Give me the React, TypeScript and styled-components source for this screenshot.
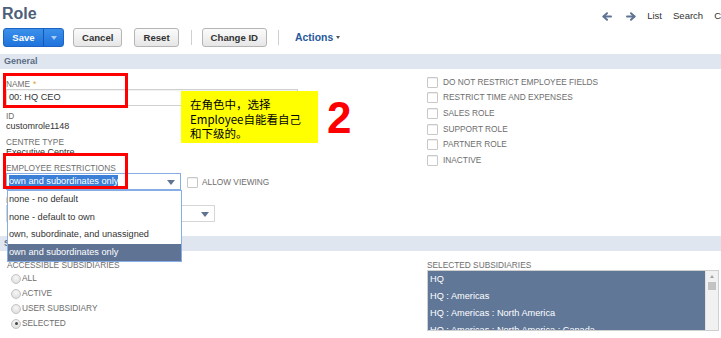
import React from 'react';
import styled, { createGlobalStyle } from 'styled-components';

const GlobalStyle = createGlobalStyle`
  html, body {
    margin: 0;
    padding: 0;
    background: #fff;
    overflow: hidden;
  }
  body {
    font-family: "Liberation Sans", Arial, sans-serif;
    color: #333;
  }
`;

const Page = styled.div`
  position: relative;
  width: 721px;
  height: 338px;
  overflow: hidden;
`;

const TitleRow = styled.div`
  display: flex;
  justify-content: space-between;
  align-items: flex-start;
  height: 26px;
`;

const Title = styled.h1`
  margin: 4px 0 0 2px;
  font-size: 16px;
  line-height: 20px;
  font-weight: bold;
  color: #4d5f79;
`;

const Nav = styled.nav`
  display: flex;
  align-items: center;
  gap: 11px;
  margin: 10px -38px 0 0;
  font-size: 9.5px;
  line-height: 12px;
  color: #333;
  white-space: nowrap;
`;

const NavArrow = styled.svg<{ $gap?: number }>`
  display: block;
  margin-right: ${p => p.$gap ?? 0}px;
`;

const Toolbar = styled.div`
  display: flex;
  align-items: center;
  height: 19px;
  margin: 2px 0 7px 3px;
`;

const SaveGroup = styled.div`
  display: flex;
  height: 19px;
  border: 1px solid #1b63c4;
  border-radius: 3px;
  box-sizing: border-box;
  background: linear-gradient(#3b90ea, #1f73dc);
  color: #fff;
  font-size: 9.6px;
  font-weight: bold;
  overflow: hidden;
`;

const SaveMain = styled.div`
  width: 39px;
  display: flex;
  align-items: center;
  justify-content: center;
`;

const SaveCaret = styled.div`
  width: 19px;
  border-left: 1px solid #1757b3;
  display: flex;
  align-items: center;
  justify-content: center;
  &::after {
    content: '';
    border-left: 3px solid transparent;
    border-right: 3px solid transparent;
    border-top: 4px solid #a9cbf3;
  }
`;

const Button = styled.div<{ $ml: number }>`
  height: 19px;
  box-sizing: border-box;
  margin-left: ${p => p.$ml}px;
  padding: 0 8px;
  border: 1px solid #b5b5b5;
  border-radius: 3px;
  background: linear-gradient(#fbfbfb, #e6e6e6);
  font-size: 9.6px;
  font-weight: bold;
  line-height: 17px;
  color: #333;
  white-space: nowrap;
`;

const Divider = styled.div<{ $ml: number }>`
  width: 1px;
  height: 15px;
  margin-left: ${p => p.$ml}px;
  background: #d0d0d0;
`;

const ActionsMenu = styled.div`
  margin-left: 16px;
  font-size: 10.4px;
  font-weight: bold;
  color: #26599a;
  display: flex;
  align-items: center;
  gap: 3px;
  &::after {
    content: '';
    border-left: 2.5px solid transparent;
    border-right: 2.5px solid transparent;
    border-top: 3px solid #555;
  }
`;

const SectionBar = styled.div`
  height: 15px;
  line-height: 15px;
  padding-left: 4px;
  background: #e0e6ef;
  font-size: 9px;
  font-weight: bold;
  color: #5a6c86;
`;

const FormGrid = styled.div`
  display: grid;
  grid-template-columns: 427px 1fr;
`;

const LeftCol = styled.div<{ $pt: number; $pb: number; $pl: number; $gap: number }>`
  display: flex;
  flex-direction: column;
  gap: ${p => p.$gap}px;
  padding: ${p => p.$pt}px 0 ${p => p.$pb}px ${p => p.$pl}px;
`;

const RightCol = styled.div<{ $pt: number }>`
  padding-top: ${p => p.$pt}px;
`;

const Field = styled.div`
  display: flex;
  flex-direction: column;
`;

const Label = styled.div`
  font-size: 8.3px;
  line-height: 9px;
  color: #6d6d6d;
  text-transform: uppercase;
  white-space: nowrap;
`;

const Star = styled.span`
  color: #e39b2e;
  margin-left: 3px;
`;

const TextBox = styled.div`
  width: 292px;
  height: 17px;
  box-sizing: border-box;
  border: 1px solid #d0d0d0;
  box-shadow: inset 0 1px 1px rgba(0, 0, 0, 0.06);
  padding-left: 2px;
  font-size: 9.2px;
  line-height: 15px;
  color: #333;
`;

const Value = styled.div`
  font-size: 9px;
  line-height: 11px;
  color: #333;
`;

const SelectRow = styled.div`
  display: flex;
  align-items: flex-start;
`;

const SelectBox = styled.div<{ $w: number; $focus?: boolean }>`
  position: relative;
  width: ${p => p.$w}px;
  height: 17px;
  box-sizing: border-box;
  border: 1px solid ${p => (p.$focus ? '#86ade4' : '#d6d6d6')};
  padding: 1px 0 0 2px;
  font-size: 9.2px;
  line-height: 13px;
  &::after {
    content: '';
    position: absolute;
    right: 5px;
    top: 6px;
    border-left: 4px solid transparent;
    border-right: 4px solid transparent;
    border-top: 5px solid #5f7394;
  }
`;

const Highlight = styled.span`
  display: inline-block;
  background: #3b7fd6;
  color: #fff;
`;

const Dropdown = styled.div`
  position: absolute;
  top: 16px;
  left: 0;
  width: 175px;
  box-sizing: border-box;
  border: 1px solid #86ade4;
  background: #fff;
  z-index: 5;
`;

const Option = styled.div<{ $active?: boolean }>`
  height: 17.6px;
  line-height: 17.6px;
  padding-left: 1px;
  font-size: 9.2px;
  white-space: nowrap;
  color: ${p => (p.$active ? '#fff' : '#333')};
  background: ${p => (p.$active ? '#5f7394' : '#fff')};
`;

const CheckBox = styled.div`
  width: 11px;
  height: 11px;
  box-sizing: border-box;
  border: 1px solid #c8c8c8;
  border-radius: 1px;
  background: #fff;
  box-shadow: inset 0 1px 1px rgba(0, 0, 0, 0.07);
  flex-shrink: 0;
`;

const InlineCheck = styled.div`
  display: flex;
  align-items: center;
  gap: 4px;
  margin: 4px 0 0 6px;
`;

const CheckRow = styled.div`
  display: flex;
  align-items: center;
  gap: 5px;
  height: 15.6px;
`;

const RadioRow = styled.div`
  display: flex;
  align-items: center;
  height: 15px;
  padding-left: 4px;
  gap: 1px;
`;

const Radio = styled.div<{ $checked?: boolean }>`
  width: 10px;
  height: 10px;
  box-sizing: border-box;
  border-radius: 50%;
  border: 1px solid #c4c4c4;
  background: radial-gradient(circle at 50% 35%, #f7f7f7, #d9d9d9);
  display: flex;
  align-items: center;
  justify-content: center;
  &::after {
    content: '';
    width: 3px;
    height: 3px;
    border-radius: 50%;
    background: ${p => (p.$checked ? '#444' : 'transparent')};
  }
`;

const ListBox = styled.div`
  display: flex;
  width: 292px;
  height: 61px;
  box-sizing: border-box;
  border: 1px solid #cfcfcf;
  overflow: hidden;
`;

const ListItems = styled.div`
  flex: 1;
  background: #607798;
`;

const ListItem = styled.div`
  height: 17px;
  line-height: 17px;
  padding-left: 2px;
  font-size: 9.2px;
  color: #fff;
  white-space: nowrap;
`;

const ScrollBar = styled.div`
  width: 12px;
  background: #f1f1f1;
  border-left: 1px solid #e2e2e2;
  display: flex;
  flex-direction: column;
  align-items: center;
  padding-top: 4px;
  gap: 4px;
  &::before {
    content: '';
    border-left: 2.5px solid transparent;
    border-right: 2.5px solid transparent;
    border-bottom: 3px solid #a3a3a3;
  }
`;

const Thumb = styled.div`
  width: 8px;
  height: 8px;
  background: #c3c3c3;
`;

const RedFrame = styled.div<{ $top: number; $left: number; $w: number; $h: number }>`
  position: absolute;
  top: ${p => p.$top}px;
  left: ${p => p.$left}px;
  width: ${p => p.$w}px;
  height: ${p => p.$h}px;
  box-sizing: border-box;
  border: 3px solid #ff0000;
  z-index: 4;
  pointer-events: none;
`;

const Note = styled.div`
  position: absolute;
  top: 91px;
  left: 181px;
  width: 137px;
  height: 52px;
  box-sizing: border-box;
  padding: 6px 4px 0 9px;
  background: #ffff00;
  font-family: "Noto Sans CJK SC", "Liberation Sans", sans-serif;
  font-size: 11.5px;
  line-height: 14.5px;
  color: #000;
  z-index: 4;
`;

const StepNumber = styled.div`
  position: absolute;
  top: 96px;
  left: 327px;
  font-size: 44px;
  line-height: 44px;
  font-weight: bold;
  color: #ff0000;
  z-index: 4;
`;

const rightChecks = [
  'Do not restrict employee fields',
  'Restrict time and expenses',
  'Sales role',
  'Support role',
  'Partner role',
  'Inactive',
];

const restrictionOptions = [
  'none - no default',
  'none - default to own',
  'own, subordinate, and unassigned',
  'own and subordinates only',
];

const radios = ['All', 'Active', 'User subsidiary', 'Selected'];

const subsidiaries = [
  'HQ',
  'HQ : Americas',
  'HQ : Americas : North America',
  'HQ : Americas : North America : Canada',
];

const Arrow = ({ dir, gap }: { dir: 'left' | 'right'; gap?: number }) => (
  <NavArrow width="10" height="9" viewBox="0 0 10 9" $gap={gap}>
    <g
      transform={dir === 'right' ? 'translate(10 0) scale(-1 1)' : undefined}
      fill="none"
      stroke="#5f7394"
      strokeWidth="2"
      strokeLinecap="round"
      strokeLinejoin="round"
    >
      <path d="M1.5 4.5 H9" />
      <path d="M5 1.2 L1.5 4.5 L5 7.8" />
    </g>
  </NavArrow>
);

export default function App() {
  return (
    <Page>
      <GlobalStyle />
      <TitleRow>
        <Title>Role</Title>
        <Nav>
          <Arrow dir="left" gap={3} />
          <Arrow dir="right" />
          <span>List</span>
          <span>Search</span>
          <span>Customize</span>
        </Nav>
      </TitleRow>

      <Toolbar>
        <SaveGroup>
          <SaveMain>Save</SaveMain>
          <SaveCaret />
        </SaveGroup>
        <Button $ml={9}>Cancel</Button>
        <Button $ml={12}>Reset</Button>
        <Divider $ml={12} />
        <Button $ml={10}>Change ID</Button>
        <Divider $ml={11} />
        <ActionsMenu>Actions</ActionsMenu>
      </Toolbar>

      <SectionBar>General</SectionBar>
      <FormGrid>
        <LeftCol $pt={11} $pb={14} $pl={6} $gap={6}>
          <Field>
            <Label>
              Name<Star>*</Star>
            </Label>
            <TextBox>00: HQ CEO</TextBox>
          </Field>
          <Field>
            <Label>ID</Label>
            <Value>customrole1148</Value>
          </Field>
          <Field>
            <Label>Centre Type</Label>
            <Value>Executive Centre</Value>
          </Field>
          <Field>
            <Label>Employee Restrictions</Label>
            <SelectRow>
              <SelectBox $w={175} $focus>
                <Highlight>own and subordinates only</Highlight>
                <Dropdown>
                  {restrictionOptions.map((o, i) => (
                    <Option key={o} $active={i === restrictionOptions.length - 1}>
                      {o}
                    </Option>
                  ))}
                </Dropdown>
              </SelectBox>
              <InlineCheck>
                <CheckBox />
                <Label>Allow Viewing</Label>
              </InlineCheck>
            </SelectRow>
          </Field>
          <Field>
            <Label>Department Restrictions</Label>
            <SelectBox $w={209} />
          </Field>
        </LeftCol>
        <RightCol $pt={5.5}>
          {rightChecks.map(c => (
            <CheckRow key={c}>
              <CheckBox />
              <Label>{c}</Label>
            </CheckRow>
          ))}
        </RightCol>
      </FormGrid>

      <SectionBar>Subsidiary Restrictions</SectionBar>
      <FormGrid>
        <LeftCol $pt={9.5} $pb={0} $pl={7} $gap={0}>
          <Label>Accessible Subsidiaries</Label>
          <div style={{ height: 1.5 }} />
          {radios.map(r => (
            <RadioRow key={r}>
              <Radio $checked={r === 'Selected'} />
              <Label>{r}</Label>
            </RadioRow>
          ))}
        </LeftCol>
        <RightCol $pt={9.5}>
          <Label>Selected Subsidiaries</Label>
          <ListBox>
            <ListItems>
              {subsidiaries.map(s => (
                <ListItem key={s}>{s}</ListItem>
              ))}
            </ListItems>
            <ScrollBar>
              <Thumb />
            </ScrollBar>
          </ListBox>
        </RightCol>
      </FormGrid>

      <RedFrame $top={73} $left={3} $w={125} $h={35} />
      <RedFrame $top={153} $left={3} $w={125} $h={36} />
      <Note>
        在角色中，选择
        <br />
        Employee自能看自己
        <br />
        和下级的。
      </Note>
      <StepNumber>2</StepNumber>
    </Page>
  );
}
